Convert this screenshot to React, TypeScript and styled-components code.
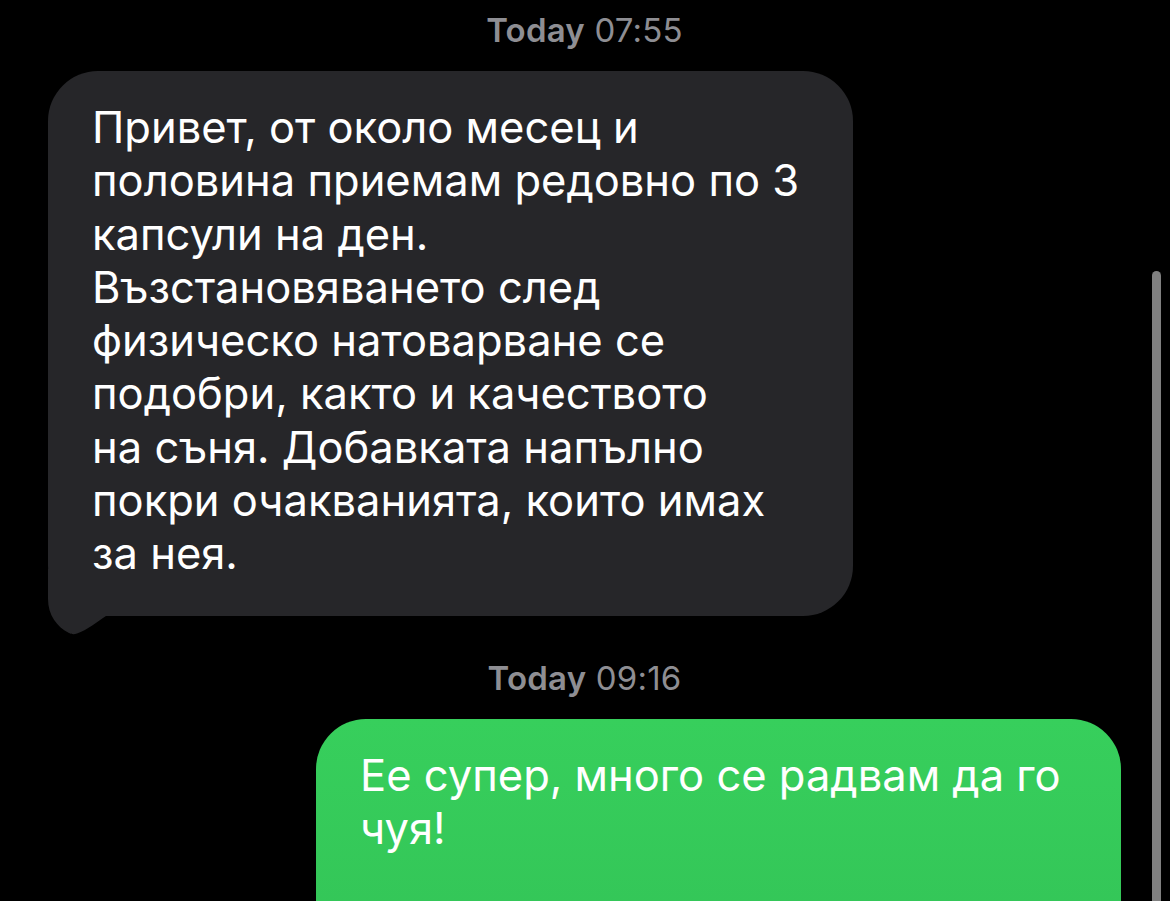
import React from 'react'
import styled, { createGlobalStyle } from 'styled-components'

const GlobalStyle = createGlobalStyle`
  html, body {
    margin: 0;
    padding: 0;
    background: #000;
    height: 901px;
    overflow: hidden;
  }
  body {
    font-family: Inter, "Noto Sans", "Liberation Sans", sans-serif;
    -webkit-font-smoothing: antialiased;
  }
`

const Thread = styled.main`
  display: flex;
  flex-direction: column;
  padding: 10px 49px 0 48px;
`

const Stamp = styled.div<{ $gap: number }>`
  margin-top: ${p => p.$gap}px;
  margin-bottom: 21px;
  text-align: center;
  font-size: 33px;
  line-height: 40px;
  color: #8e8e93;
  letter-spacing: 0.2px;

  b {
    font-weight: 600;
  }
`

const Bubble = styled.div<{ $mine?: boolean }>`
  position: relative;
  box-sizing: border-box;
  width: 805px;
  align-self: ${p => (p.$mine ? 'flex-end' : 'flex-start')};
  padding: 30px 40px ${p => (p.$mine ? '110px' : '35px')} 44px;
  border-radius: 50px;
  background: ${p => (p.$mine ? 'linear-gradient(#37cf5c, #33c457)' : '#262629')};
  color: #fff;
  font-size: 43.5px;
  line-height: 53.3px;
  white-space: nowrap;
`

const Tail = styled.svg`
  position: absolute;
  left: -8px;
  bottom: -23px;
  width: 70px;
  height: 70px;
`

const ScrollThumb = styled.div`
  position: fixed;
  right: 9px;
  top: 271px;
  bottom: 0;
  width: 9px;
  border-radius: 5px 5px 0 0;
  background: #808080;
`

const received = [
  'Привет, от около месец и',
  'половина приемам редовно по 3',
  'капсули на ден.',
  'Възстановяването след',
  'физическо натоварване се',
  'подобри, както и качеството',
  'на съня. Добавката напълно',
  'покри очакванията, които имах',
  'за нея.',
]

const sent = ['Ее супер, много се радвам да го', 'чуя!']

function Lines({ lines }: { lines: string[] }) {
  return (
    <>
      {lines.map((l, i) => (
        <React.Fragment key={i}>
          {l}
          {i < lines.length - 1 && <br />}
        </React.Fragment>
      ))}
    </>
  )
}

export default function App() {
  return (
    <>
      <GlobalStyle />
      <Thread lang="bg">
        <Stamp $gap={0}>
          <b>Today</b> 07:55
        </Stamp>
        <Bubble>
          <Lines lines={received} />
          <Tail viewBox="0 0 70 70">
            <path
              d="M8 0 L8 30 C8 46 17 58 29 64 C32 65.5 34 65.5 37 64.5 C47 61 57 53 66 47 L70 47 L70 0 Z"
              fill="#262629"
            />
          </Tail>
        </Bubble>
        <Stamp $gap={42}>
          <b>Today</b> 09:16
        </Stamp>
        <Bubble $mine>
          <Lines lines={sent} />
        </Bubble>
      </Thread>
      <ScrollThumb />
    </>
  )
}
